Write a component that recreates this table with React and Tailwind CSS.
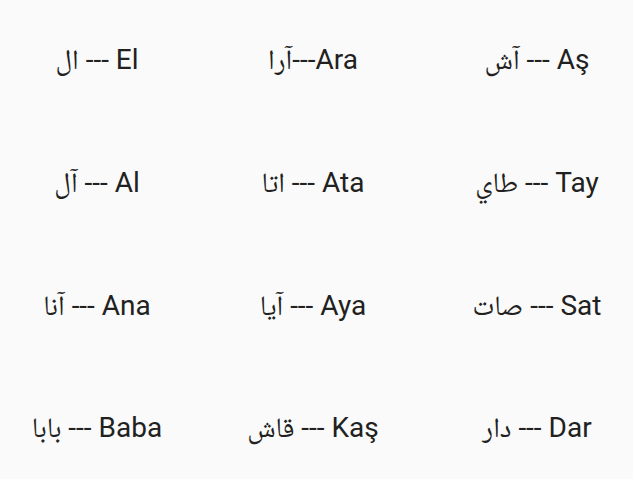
const items = [
  "ال --- El",
  "آرا---Ara",
  "آش --- Aş",
  "آل --- Al",
  "اتا --- Ata",
  "طاي --- Tay",
  "آنا --- Ana",
  "آيا --- Aya",
  "صات --- Sat",
  "بابا --- Baba",
  "قاش --- Kaş",
  "دار --- Dar",
]

export default function App() {
  return (
    <div className="w-[633px] h-[479px] bg-[#fafafa] overflow-hidden font-['Roboto','Noto_Naskh_Arabic','Noto_Sans_Arabic','DejaVu_Sans',sans-serif] text-[#212121]">
      <div className="grid grid-cols-[194px_238px_210px] auto-rows-[122.67px] -mt-[1px]">
        {items.map((t) => (
          <div key={t} className="flex items-center justify-center text-[28px] whitespace-nowrap">
            <span dir="ltr">{t}</span>
          </div>
        ))}
      </div>
    </div>
  )
}
